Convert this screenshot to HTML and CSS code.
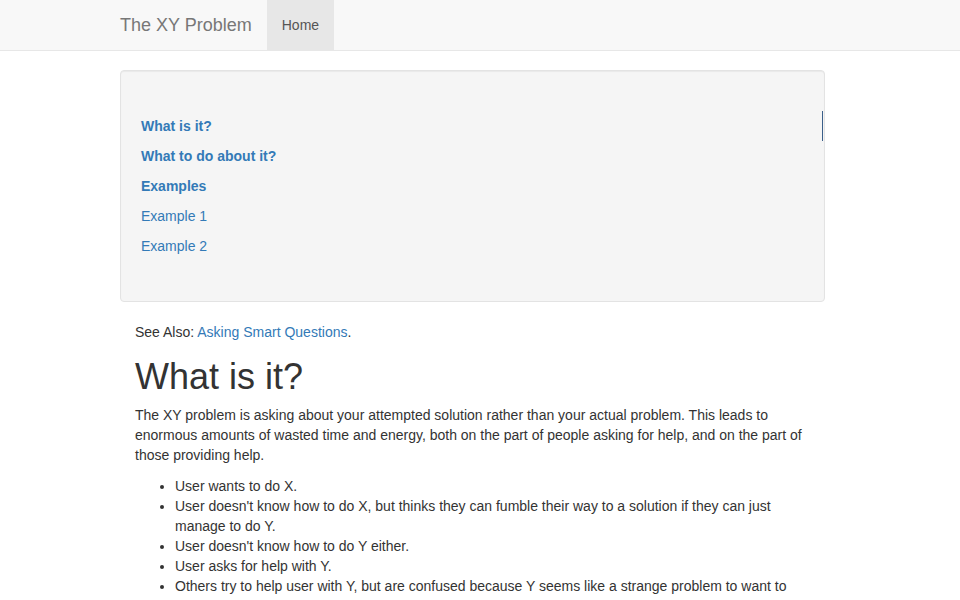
FILE: index.html
```html
<!DOCTYPE html>
<html lang="en">
<head>
  <meta charset="UTF-8">
  <meta name="viewport" content="width=device-width, initial-scale=1.0">
  <title>The XY Problem</title>
  <link rel="stylesheet" href="styles.css">
</head>
<body>
  <nav class="navbar">
    <div class="container navbar-inner">
      <a class="navbar-brand" href="#">The XY Problem</a>
      <ul class="navbar-nav">
        <li class="active"><a href="#">Home</a></li>
      </ul>
    </div>
  </nav>

  <div class="container">
    <div class="main">
      <div class="well">
        <ul class="sidenav">
          <li class="active"><a class="strong" href="#what">What is it?</a></li>
          <li><a class="strong" href="#todo">What to do about it?</a></li>
          <li><a class="strong" href="#examples">Examples</a></li>
          <li><a href="#example1">Example 1</a></li>
          <li><a href="#example2">Example 2</a></li>
        </ul>
      </div>

      <div class="content">
        <p class="see-also">See Also: <a href="#">Asking Smart Questions</a>.</p>

        <h1 id="what">What is it?</h1>
        <p class="intro">The XY problem is asking about your attempted solution rather than your actual problem. This leads to enormous amounts of wasted time and energy, both on the part of people asking for help, and on the part of those providing help.</p>

        <ul class="steps">
          <li>User wants to do X.</li>
          <li>User doesn't know how to do X, but thinks they can fumble their way to a solution if they can just manage to do Y.</li>
          <li>User doesn't know how to do Y either.</li>
          <li>User asks for help with Y.</li>
          <li>Others try to help user with Y, but are confused because Y seems like a strange problem to want to solve.</li>
          <li>After much interaction and wasted time, it finally becomes clear that the user really wants help with X, and that Y wasn't even a suitable solution for X.</li>
        </ul>
      </div>
    </div>
  </div>
</body>
</html>
```

FILE: styles.css
```css
* {
  box-sizing: border-box;
}

body {
  margin: 0;
  font-family: "Liberation Sans", Arial, sans-serif;
  font-size: 14px;
  line-height: 20px;
  color: #333;
  background: #fff;
}

a {
  color: #337ab7;
  text-decoration: none;
}

.container {
  width: 750px;
  margin: 0 auto;
  padding: 0 15px;
}

/* navbar */
.navbar {
  height: 51px;
  background-color: #f8f8f8;
  border-bottom: 1px solid #e7e7e7;
  margin-bottom: 19px;
}

.navbar-inner {
  display: flex;
  height: 50px;
}

.navbar-brand {
  margin-left: -15px;
  padding: 15px;
  font-size: 18px;
  line-height: 20px;
  color: #777;
}

.navbar-nav {
  display: flex;
  list-style: none;
  margin: 0;
  padding: 0;
}

.navbar-nav a {
  display: block;
  padding: 15px;
  color: #777;
}

.navbar-nav .active a {
  background-color: #e7e7e7;
  color: #555;
}

/* sidebar well */
.main {
  width: 705px;
}

.well {
  min-height: 20px;
  padding: 19px 19px 19px 20px;
  margin-bottom: 20px;
  background-color: #f5f5f5;
  border: 1px solid #e3e3e3;
  border-radius: 4px;
  box-shadow: inset 0 1px 1px rgba(0, 0, 0, 0.05);
}

.sidenav {
  list-style: none;
  margin: 21px -18px 21px 0;
  padding: 0;
}

.sidenav a {
  display: block;
  padding: 5px 0;
}

.sidenav .strong {
  font-weight: bold;
}

.sidenav .active a {
  border-right: 1px solid #3b5f8a;
}

/* article */
.content {
  padding: 0 15px;
}

.content p {
  margin: 0 0 10px;
}

.content .see-also {
  margin-bottom: 15px;
}

.content .intro {
  margin-bottom: 11px;
}

h1 {
  margin: 0 0 8px;
  font-size: 36px;
  font-weight: 500;
  line-height: 1.1;
}

.steps {
  margin: 0 0 10px;
  padding-left: 40px;
}
```
